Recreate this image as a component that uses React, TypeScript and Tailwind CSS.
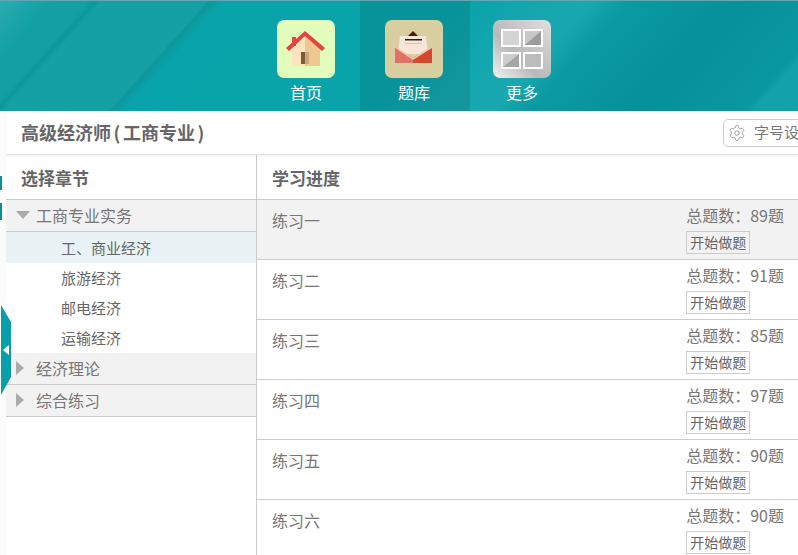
import {Settings} from "lucide-react";

const chapters = ["工、商业经济", "旅游经济", "邮电经济", "运输经济"];

const exercises = [
    {name: "练习一", total: 89},
    {name: "练习二", total: 91},
    {name: "练习三", total: 85},
    {name: "练习四", total: 97},
    {name: "练习五", total: 90},
    {name: "练习六", total: 90},
];

const HomeIcon = () => (
    <svg viewBox="0 0 58 58" className="w-[58px] h-[58px]">
        <rect width="58" height="58" rx="7" fill="#e2fcbb"/>
        <path d="M15 26 L28 14 L43 27 V46 H15 Z" fill="#fce3bf"/>
        <path d="M28 14 L43 27 V46 H28 Z" fill="#eec88e"/>
        <rect x="24" y="32" width="8" height="12" fill="#c9a878"/>
        <rect x="24" y="32" width="4" height="12" fill="#7a5b3a"/>
        <rect x="15" y="17" width="4" height="9" fill="#e8423f"/>
        <path d="M9 28 L28 11 L48 28 L45 31 L28 16 L12 31 Z" fill="#e8423f"/>
    </svg>
);

const MailIcon = () => (
    <svg viewBox="0 0 58 58" className="w-[58px] h-[58px]">
        <rect width="58" height="58" rx="7" fill="#d8cea0"/>
        <path d="M22 17 H34 L28 11 Z" fill="#4a1c10"/>
        <path d="M15 16 H41 L43 34 H13 Z" fill="#f5e6d8"/>
        <rect x="20" y="19" width="17" height="1.5" fill="#2f211a"/>
        <rect x="20" y="23" width="17" height="1" fill="#d9c3b0"/>
        <path d="M10 27 L28 38 V43 H10 Z" fill="#de7263"/>
        <path d="M47 27 L28 38 V43 H47 Z" fill="#d2492d"/>
        <path d="M10 27 L28 39 L47 27" fill="none" stroke="#f3c4b4" strokeWidth="1.5"/>
    </svg>
);

const GridIcon = () => (
    <svg viewBox="0 0 58 58" className="w-[58px] h-[58px]">
        <defs>
            <linearGradient id="grid-bg" x1="0" y1="1" x2="1" y2="0">
                <stop offset="0" stopColor="#f2f2f2"/>
                <stop offset="0.4" stopColor="#b9b9b9"/>
                <stop offset="0.6" stopColor="#c4c4c4"/>
                <stop offset="1" stopColor="#e0e0e0"/>
            </linearGradient>
        </defs>
        <rect width="58" height="58" rx="7" fill="url(#grid-bg)"/>
        <rect x="9" y="10" width="18" height="16" fill="#d4d4d4" stroke="#fff" strokeWidth="2"/>
        <rect x="31" y="10" width="18" height="16" fill="#c8c8c8" stroke="#fff" strokeWidth="2"/>
        <path d="M32 25 L48 11 V25 Z" fill="#9c9c9c"/>
        <rect x="9" y="33" width="18" height="15" fill="#cdcdcd" stroke="#fff" strokeWidth="2"/>
        <path d="M10 47 L26 34 V47 Z" fill="#a6a6a6"/>
        <rect x="31" y="33" width="18" height="15" fill="#bcbcbc" stroke="#fff" strokeWidth="2"/>
    </svg>
);

const navItems = [
    {label: "首页", icon: <HomeIcon/>, cls: "w-[108px]"},
    {label: "题库", icon: <MailIcon/>, cls: "w-[110px] pr-[2px] bg-[#00000018]"},
    {label: "更多", icon: <GridIcon/>, cls: "w-[104px]"},
];

const TreeHeader = ({label, open}: {label: string; open?: boolean}) => (
    <div className="h-8 flex items-center pb-[2px] bg-[#f2f2f2] border-b border-[#cccccc] text-base text-[#777]">
        <span className="w-[30px] pl-[10px] flex items-center shrink-0">
            {open ? (
                <span className="w-0 h-0 border-x-[7px] border-x-transparent border-t-[8px] border-t-[#aaaaaa]"/>
            ) : (
                <span className="w-0 h-0 border-y-[7px] border-y-transparent border-l-[8px] border-l-[#aaaaaa]"/>
            )}
        </span>
        {label}
    </div>
);

export default function App() {
    return (
        <div className="relative w-[798px] h-[555px] overflow-hidden bg-[#fafbfb] text-[#666] font-['Noto_Sans_CJK_SC','Liberation_Sans',sans-serif]">
            <header
                className="h-[111px] flex pl-[252px] border-t border-[#5fa9b5] bg-[linear-gradient(132deg,#2aacb0_0%,#12a0a4_6%,#12a0a4_10%,#0c979c_10.6%,#14a0a4_11.5%,#14a0a5_23%,#0c979c_23.5%,#09a4ab_25%,#09a3aa_52%,#14a6ae_60%,#1aa8b0_66%,#0b9aa2_70%,#06919a_82%,#0a98a0_94%,#14a2aa_95%,#14a2aa_100%)]">
                <nav className="flex">
                    {navItems.map(item => (
                        <a key={item.label} href="#"
                           className={`h-[110px] flex flex-col items-center pt-[19px] text-white text-base ${item.cls}`}>
                            {item.icon}
                            <span className="mt-[2px] leading-[24px]">{item.label}</span>
                        </a>
                    ))}
                </nav>
            </header>

            <div className="ml-[6px] bg-white">
                <div className="h-[44px] flex items-center border-b border-[#e4e4e4] shadow-[0_1px_2px_rgba(0,0,0,0.08)]">
                    <h1 className="w-[717px] shrink-0 pl-[15px] text-[18px] font-bold whitespace-pre [word-spacing:-1.5px]">高级经济师 ( 工商专业 )</h1>
                    <button
                        className="w-[100px] h-[28px] shrink-0 flex items-center pl-[4px] gap-[8px] border border-[#cccccc] rounded-[5px] text-[15px] text-[#777] whitespace-nowrap">
                        <Settings className="w-[18px] h-[18px] text-[#999]" strokeWidth={1.25}/>
                        字号设置
                    </button>
                </div>

                <div className="flex h-[400px]">
                    <aside className="w-[251px] shrink-0 border-r border-[#cccccc]">
                        <h2 className="h-[45px] flex items-center pt-[2px] pl-[15px] text-[17px] font-bold border-b border-[#cccccc]">选择章节</h2>
                        <TreeHeader label="工商专业实务" open/>
                        <ul className="text-[15px]">
                            {chapters.map((c, i) => (
                                <li key={c} className={`flex items-center pl-[55px] ${i === 0 ? "h-[31px] pt-[1px] bg-[#e9f3f5]" : "h-[30px]"}`}>{c}</li>
                            ))}
                        </ul>
                        <TreeHeader label="经济理论"/>
                        <TreeHeader label="综合练习"/>
                    </aside>

                    <main className="flex-1">
                        <h2 className="h-[45px] flex items-center pt-[2px] pl-[15px] text-[17px] font-bold border-b border-[#cccccc]">学习进度</h2>
                        {exercises.map((ex, i) => (
                            <div key={ex.name}
                                 className={`h-[60px] flex justify-between pl-[15px] pr-[14px] border-b border-[#cccccc] ${i === 0 ? "bg-[#f2f2f2]" : ""}`}>
                                <span className="mt-[8px] text-base text-[#777]">{ex.name}</span>
                                <div className="pt-[3px]">
                                    <div className="text-base leading-[24px] text-[#777]">总题数：{ex.total}题</div>
                                    <button className="w-[64px] h-[23px] mt-[4px] block border border-[#cccccc] text-sm leading-[21px] text-center text-[#666]">开始做题</button>
                                </div>
                            </div>
                        ))}
                    </main>
                </div>
            </div>

            <div className="absolute left-0 top-[176px] w-[2px] h-[14px] bg-[#0a8f96]"/>
            <div className="absolute left-0 top-[203px] w-[2px] h-[17px] bg-[#0a8f96]"/>
            <div className="absolute left-[1px] top-[305px] w-[10px] h-[90px] flex items-center justify-center bg-[#07a0aa] [clip-path:polygon(0_0,100%_19%,100%_80%,0_100%)]">
                <span className="w-0 h-0 border-y-[5px] border-y-transparent border-r-[6px] border-r-white"/>
            </div>
        </div>
    );
}
